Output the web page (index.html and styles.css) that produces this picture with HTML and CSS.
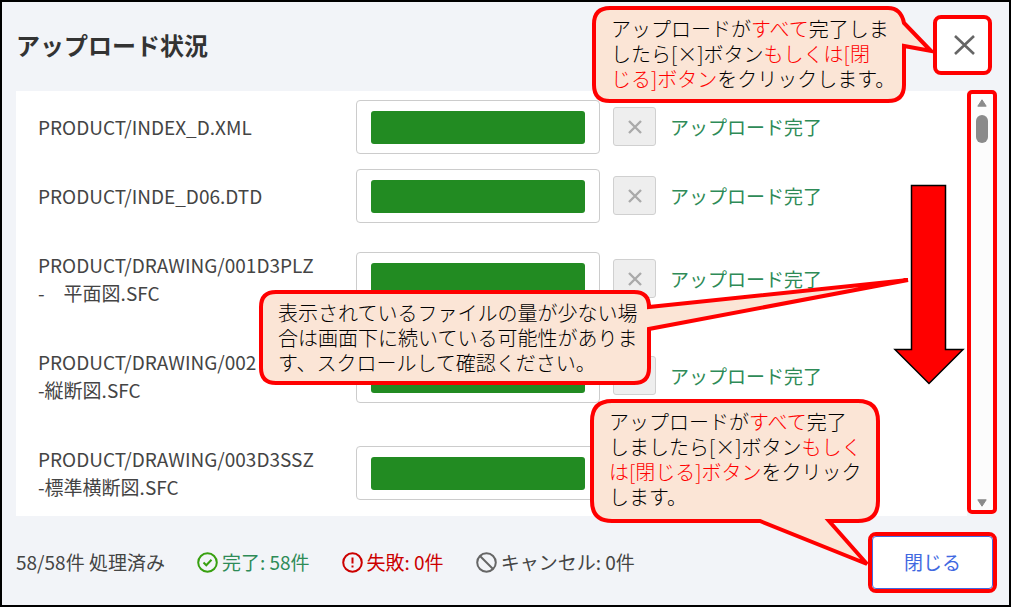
FILE: index.html
```
<!DOCTYPE html>
<html lang="ja">
<head>
    <meta charset="UTF-8">
    <meta name="viewport" content="width=device-width, initial-scale=1.0">
    <title>アップロード状況</title>
    <link rel="stylesheet" href="styles.css">
</head>
<body>
    <div class="dialog">
        <header class="dialog-header">
            <h2>アップロード状況</h2>
            <button type="button" class="close-icon" aria-label="閉じる">
                <svg width="24" height="22" viewBox="0 0 24 22"><path d="M4 2L23 20M23 2L4 20" fill="none" stroke="#666" stroke-width="2.6"/></svg>
            </button>
        </header>

        <main class="list">
            <div class="list-body">
                <table class="files">
                    <tr>
                        <td class="name">PRODUCT/INDEX_D.XML</td>
                        <td class="bar"><div class="bar-box"><progress value="100" max="100" aria-label="INDEX_D.XML"></progress></div></td>
                        <td class="cancel"><button type="button" disabled aria-label="キャンセル"><svg width="14" height="14" viewBox="0 0 14 14"><path d="M1 1L13 13M13 1L1 13"/></svg></button></td>
                        <td class="status">アップロード完了</td>
                    </tr>
                    <tr>
                        <td class="name">PRODUCT/INDE_D06.DTD</td>
                        <td class="bar"><div class="bar-box"><progress value="100" max="100" aria-label="INDE_D06.DTD"></progress></div></td>
                        <td class="cancel"><button type="button" disabled aria-label="キャンセル"><svg width="14" height="14" viewBox="0 0 14 14"><path d="M1 1L13 13M13 1L1 13"/></svg></button></td>
                        <td class="status">アップロード完了</td>
                    </tr>
                    <tr>
                        <td class="name">PRODUCT/DRAWING/001D3PLZ<br>-　平面図.SFC</td>
                        <td class="bar"><div class="bar-box"><progress value="100" max="100" aria-label="平面図.SFC"></progress></div></td>
                        <td class="cancel"><button type="button" disabled aria-label="キャンセル"><svg width="14" height="14" viewBox="0 0 14 14"><path d="M1 1L13 13M13 1L1 13"/></svg></button></td>
                        <td class="status">アップロード完了</td>
                    </tr>
                    <tr>
                        <td class="name">PRODUCT/DRAWING/002<br>-縦断図.SFC</td>
                        <td class="bar"><div class="bar-box"><progress value="100" max="100" aria-label="縦断図.SFC"></progress></div></td>
                        <td class="cancel"><button type="button" disabled aria-label="キャンセル"><svg width="14" height="14" viewBox="0 0 14 14"><path d="M1 1L13 13M13 1L1 13"/></svg></button></td>
                        <td class="status">アップロード完了</td>
                    </tr>
                    <tr>
                        <td class="name">PRODUCT/DRAWING/003D3SSZ<br>-標準横断図.SFC</td>
                        <td class="bar"><div class="bar-box"><progress value="100" max="100" aria-label="標準横断図.SFC"></progress></div></td>
                        <td class="cancel"></td>
                        <td class="status"></td>
                    </tr>
                </table>
            </div>
            <div class="scrollbar">
                <svg width="10" height="8" viewBox="0 0 10 8"><path d="M5 0.8L9.2 7.2H0.8Z" fill="#8b8b8b" stroke="#8b8b8b" stroke-linejoin="round"/></svg>
                <div class="thumb"></div>
                <svg class="down" width="10" height="8" viewBox="0 0 10 8"><path d="M5 7.2L9.2 0.8H0.8Z" fill="#8b8b8b" stroke="#8b8b8b" stroke-linejoin="round"/></svg>
            </div>
        </main>

        <footer class="dialog-footer">
            <span>58/58件 処理済み</span>
            <span class="count done">
                <svg width="21" height="21" viewBox="0 0 21 21"><circle cx="10.5" cy="10.5" r="9.3"/><path d="M6.5 10.5L9.3 13.3L14.5 7.8"/></svg>
                完了: 58件
            </span>
            <span class="count failed">
                <svg width="21" height="21" viewBox="0 0 21 21"><circle cx="10.5" cy="10.5" r="9.3"/><path d="M10.5 5.5V11.6M10.5 13.4V15.4"/></svg>
                失敗: 0件
            </span>
            <span class="count cancelled">
                <svg width="21" height="21" viewBox="0 0 21 21"><circle cx="10.5" cy="10.5" r="9.3"/><path d="M4 4L17 17"/></svg>
                キャンセル: 0件
            </span>
            <button type="button" class="close-btn">閉じる</button>
        </footer>

        <!-- callouts over the dialog -->
        <svg class="arrow" width="72" height="202" viewBox="0 0 72 202"><path d="M18.500 1.500H52.500V165.500H70L36 199.500L2 165.500H18.500Z" fill="#f00" stroke="#000" stroke-width="1.5"/></svg>

        <div class="callout callout-list">
            <svg width="654" height="100" viewBox="0 0 654 100"><path d="M17 4H375Q390 4 390 19L649 -8L390 41V80Q390 95 375 95H17Q2 95 2 80V19Q2 4 17 4Z"/></svg>
            <p>表示されているファイルの量が少ない場<br>合は画面下に続いている可能性がありま<br>す、スクロールして確認ください。</p>
        </div>

        <div class="callout callout-top">
            <svg width="344" height="100" viewBox="0 0 344 100"><path d="M18 4H296Q309 4 312 19L339 47L312 42V81Q312 97 296 97H18Q2 97 2 81V20Q2 4 18 4Z"/></svg>
            <p>アップロードが<em>すべて</em>完了しま<br>したら[×]ボタン<em>もしくは[閉</em><br><em>じる]ボタン</em>をクリックします。</p>
        </div>

        <div class="callout callout-bottom">
            <svg width="284" height="170" viewBox="0 0 284 170"><path d="M22 4H268Q288 4 288 24V104Q288 124 268 124H239L277 167L170 124H22Q2 124 2 104V24Q2 4 22 4Z"/></svg>
            <p>アップロードが<em>すべて</em>完了<br>しましたら[×]ボタン<em>もしく</em><br><em>は[閉じる]ボタン</em>をクリック<br>します。</p>
        </div>
    </div>
</body>
</html>
```

FILE: styles.css
```
* {
    box-sizing: border-box;
}

body {
    margin: 0;
    font-family: "Noto Sans CJK JP", sans-serif;
    font-size: 19px;
    line-height: 28px;
    color: #444;
}

button {
    font: inherit;
    padding: 0;
    display: flex;
    align-items: center;
    justify-content: center;
}

.dialog {
    position: relative;
    display: flex;
    flex-direction: column;
    min-height: 100vh;
    overflow: hidden;
    border: 2px solid #000;
    background-color: #f2f4f8;
}

.dialog-header {
    display: flex;
    align-items: center;
    justify-content: space-between;
    height: 89px;
    padding: 0 17px 3px 14px;
}

h2 {
    margin: 0;
    font-size: 24px;
    font-weight: bold;
    color: #333;
}

.close-icon {
    width: 59px;
    height: 60px;
    border: 4px solid #f00;
    border-radius: 8px;
    background-color: #fff;
}

.list {
    flex: 1 1 0;
    min-height: 0;
    display: flex;
    padding: 0 12px 0 14px;
}

.list-body {
    flex: 1;
    padding-top: 1px;
    overflow: hidden;
    background-color: #fff;
}

.files {
    width: 100%;
    height: 0;
    table-layout: fixed;
    border-collapse: collapse;
}

.files td {
    padding: 0;
    vertical-align: middle;
}

.files .name {
    width: 340px;
    padding: 21px 0 20px 22px;
    white-space: nowrap;
}

.files .bar {
    width: 257px;
}

.files .cancel {
    width: 57px;
}

.files .status {
    color: #2e8b57;
}

.bar-box {
    display: flex;
    width: 244px;
    height: 54px;
    padding: 10px 14px;
    border: 1px solid #ccc;
    border-radius: 4px;
}

progress {
    appearance: none;
    width: 100%;
    height: 33px;
    border: none;
    border-radius: 3px;
    overflow: hidden;
}

progress::-webkit-progress-bar {
    background-color: #eee;
}

progress::-webkit-progress-value {
    background-color: #228b22;
}

.cancel button {
    width: 43px;
    height: 39px;
    border: 1px solid #d0d0d0;
    border-radius: 3px;
    background-color: #eee;
}

.cancel path {
    fill: none;
    stroke: #aaa;
    stroke-width: 2.4;
}

.scrollbar {
    display: flex;
    flex-direction: column;
    align-items: center;
    gap: 8px;
    width: 30px;
    margin: -1px 0 2px;
    padding: 5px 0 3px;
    border: 4px solid #f00;
    border-radius: 5px;
    background-color: #fcfcfc;
}

.thumb {
    width: 12px;
    height: 28px;
    border-radius: 6px;
    background-color: #8b8b8b;
}

.scrollbar .down {
    margin-top: auto;
}

.dialog-footer {
    display: flex;
    align-items: center;
    gap: 32px;
    height: 89px;
    padding: 3px 16px 0 14px;
    white-space: nowrap;
}

.count {
    display: flex;
    align-items: center;
    gap: 4px;
}

.count svg {
    fill: none;
    stroke-width: 2;
}

.done {
    color: #2e8b57;
}

.done svg {
    stroke: #38a010;
}

.failed {
    color: #c00;
}

.failed svg {
    stroke: #c00;
}

.cancelled svg {
    stroke: #666;
}

.close-btn {
    width: 121px;
    height: 53px;
    margin-left: auto;
    border: 1px solid #4169e1;
    border-radius: 4px;
    outline: 4px solid #f00;
    background-color: #fff;
    color: #4169e1;
}

/* callouts */
.callout {
    position: absolute;
    font-size: 20px;
    font-weight: 300;
    line-height: 25px;
    color: #000;
}

.callout svg {
    position: absolute;
    top: 0;
    left: 0;
    overflow: visible;
    fill: #fbe5d6;
    stroke: #f00;
    stroke-width: 4;
}

.callout p {
    position: relative;
    margin: 0;
    padding: 12px 19px;
    white-space: nowrap;
}

.callout em {
    font-style: normal;
    color: #f00;
}

.callout-top {
    top: 2px;
    right: 103px;
    width: 314px;
}

.callout-list {
    top: 286px;
    right: 358px;
    width: 392px;
}

.callout-bottom {
    right: 129px;
    bottom: 84px;
    width: 290px;
}

.arrow {
    position: absolute;
    top: 182px;
    right: 44px;
}
```
